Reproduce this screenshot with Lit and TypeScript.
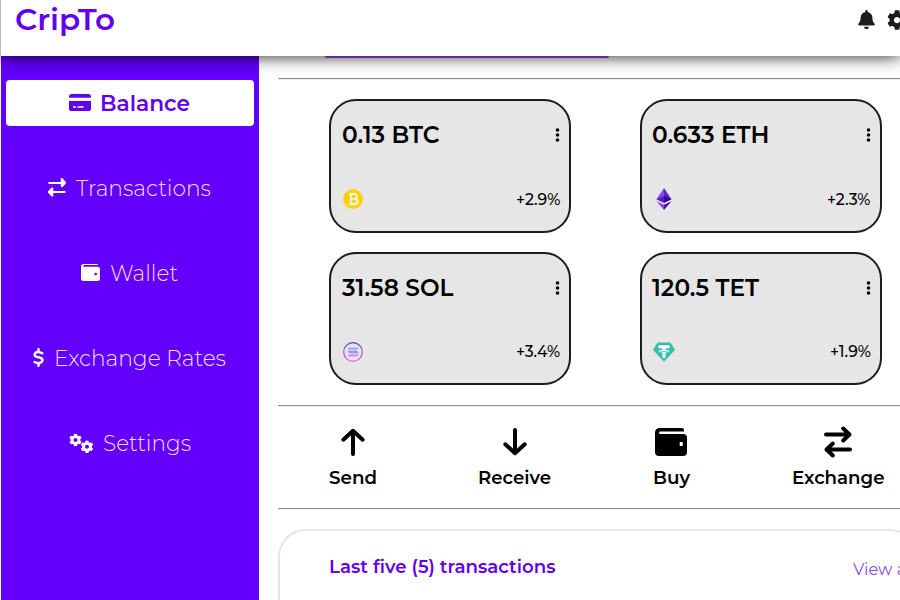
import { LitElement, html, svg, css, TemplateResult } from "lit";
import { customElement } from "lit/decorators.js";

const COG =
  "M487.4 315.7l-42.6-24.6c4.3-23.2 4.3-47 0-70.2l42.6-24.6c4.9-2.8 7.1-8.6 5.5-14-11.1-35.6-30-67.8-54.7-94.6-3.8-4.1-10-5.1-14.8-2.3L380.8 110c-17.9-15.4-38.5-27.3-60.8-35.1V25.8c0-5.6-3.9-10.5-9.4-11.7-36.7-8.2-74.3-7.8-109.2 0-5.5 1.2-9.4 6.1-9.4 11.7V75c-22.2 7.9-42.8 19.8-60.8 35.1L88.7 85.5c-4.9-2.8-11-1.9-14.8 2.3-24.7 26.7-43.6 58.9-54.7 94.6-1.7 5.4.6 11.2 5.5 14L67.3 221c-4.3 23.2-4.3 47 0 70.2l-42.6 24.6c-4.9 2.8-7.1 8.6-5.5 14 11.1 35.6 30 67.8 54.7 94.6 3.8 4.1 10 5.1 14.8 2.3l42.6-24.6c17.9 15.4 38.5 27.3 60.8 35.1v49.2c0 5.6 3.9 10.5 9.4 11.7 36.7 8.2 74.3 7.8 109.2 0 5.5-1.2 9.4-6.1 9.4-11.7v-49.2c22.2-7.9 42.8-19.8 60.8-35.1l42.6 24.6c4.9 2.8 11 1.9 14.8-2.3 24.7-26.7 43.6-58.9 54.7-94.6 1.5-5.5-.7-11.3-5.6-14.1zM256 336c-44.1 0-80-35.9-80-80s35.9-80 80-80 80 35.9 80 80-35.9 80-80 80z";
const BELL =
  "M224 512c35.32 0 63.97-28.65 63.97-64H160.03c0 35.35 28.65 64 63.97 64zm215.39-149.71c-19.32-20.76-55.47-51.99-55.47-154.29 0-77.7-54.48-139.9-127.94-155.16V32c0-17.67-14.32-32-31.98-32s-31.98 14.33-31.98 32v20.84C118.56 68.1 64.08 130.3 64.08 208c0 102.3-36.15 133.53-55.47 154.29-6 6.45-8.66 14.16-8.61 21.71.11 16.4 12.98 32 32.1 32h383.8c19.12 0 32-15.6 32.1-32 .05-7.55-2.61-15.27-8.61-21.71z";

// A line of text stretched to a set width; the baseline sits 6px above the box bottom.
const label = (text: string, width: number, cls: string) => html`
  <svg class="label ${cls}" width=${width} height="26">
    <text x="0" y="20" textLength=${width} lengthAdjust="spacingAndGlyphs">${text}</text>
  </svg>`;

const icon = (w: number, h: number, body: TemplateResult | unknown, box = `0 0 ${w} ${h}`) =>
  html`<svg class="icon" width=${w} height=${h} viewBox=${box}>${body}</svg>`;

const cardIcon = icon(22, 17, svg`
  <path d="M0 3.7V2.6A2.6 2.6 0 0 1 2.6 0h16.8A2.6 2.6 0 0 1 22 2.6v1.1z" />
  <path fill-rule="evenodd" d="M0 7h22v7.4a2.6 2.6 0 0 1-2.6 2.6H2.6A2.6 2.6 0 0 1 0 14.400zM4 12.300v1.400h3v-1.400zM8.500 12.300v1.400h6v-1.400z" />`);
const swapIcon = icon(18, 19, svg`
  <path d="M1.200 4h11.500V1.200c0-1.100 1.200-1.500 2-.8l2.900 3.300c.6.700.6 1.300 0 2l-2.900 3.200c-.8.700-2 .3-2-.8V6H1.200a1 1 0 0 1 0-2z" />
  <path d="M16.800 13H5.300v-2.400c0-1.100-1.200-1.500-2-.8L.4 13.100c-.6.700-.6 1.300 0 2l2.900 3.200c.8.700 2 .3 2-.8V15h11.500a1 1 0 0 0 0-2z" />`);
const walletSmall = icon(19, 17, svg`
  <path fill-rule="evenodd" d="M2.600 0h13.200c.7 0 1.200.5 1.200 1.100H3.200a.8.800 0 0 0 0 1.700h13.500A2.300 2.300 0 0 1 19 5v9.500a2.500 2.500 0 0 1-2.500 2.500h-14A2.500 2.500 0 0 1 0 14.500v-12A2.500 2.500 0 0 1 2.600 0zM14.700 8.800a1.300 1.300 0 1 0 0 2.600 1.300 1.300 0 0 0 0-2.600z" />`);
const dollarIcon = icon(11, 19, svg`
  <path class="stroke" stroke-width="2.500" d="M5.500 1.200v2.500M5.500 15.300v2.500M9.300 5.300C7.500 4.200 5.900 3.800 4.300 4 1.300 4.500.9 7.700 3.200 8.600c1.500.7 3.300.6 4.900 1.500 2.300 1.300 1.400 4.600-1.400 5C5 15.400 3.100 14.900 1.600 14" />`);
const cogsIcon = icon(24, 20, svg`
  <svg x="0" y=".5" width="13" height="13" viewBox="0 0 512 512"><path d=${COG} /></svg>
  <svg x="11.500" y="7.300" width="13" height="13" viewBox="0 0 512 512"><path d=${COG} /></svg>`);

const upIcon = icon(24, 28, svg`<path class="stroke" stroke-width="4" d="M12 26V3.500M2.300 11.700 12 2.800l9.700 8.900" />`);
const downIcon = icon(24, 28, svg`<path class="stroke" stroke-width="4" d="M12 2v22.500M2.300 16.300 12 25.200l9.700-8.900" />`);
const walletBig = icon(32, 28, svg`
  <path fill-rule="evenodd" d="M4.500 0H27a2 2 0 0 1 2 2v1.500H5.200a1.200 1.200 0 0 0 0 2.400H28a4 4 0 0 1 4 4V24a4 4 0 0 1-4 4H4a4 4 0 0 1-4-4V4.500A4.500 4.500 0 0 1 4.500 0zM24.700 14v4h3v-4z" />`);
const exchangeBig = icon(28, 32, svg`
  <path class="stroke" stroke-width="4" d="M2 8.500h23M19.200 2.500 25.500 8.500l-6.300 6M26 23.500H3M8.800 17.500 2.500 23.500l6.300 6" />`);

const btc = svg`
  <circle cx="11" cy="11" r="10" fill="#ffd012" />
  <path fill="none" stroke="#fff" stroke-width="1.500" d="M8.700 6.300v9.600M7.300 6.300h5c3.500 0 3.500 4.500 0 4.500H8.700h4c3.900 0 3.900 5.100 0 5.100H7.300M10 4.700v1.600M12.500 4.700v1.600M10 15.900v1.600M12.500 15.900v1.600" />`;
const eth = svg`
  <path fill="#8247e5" d="M11 0v14.700L3.500 11.200z" /><path fill="#5f23cc" d="M11 0v14.700l7.500-3.500z" />
  <path fill="#5a1cc4" d="M11 8v6.700l-7.500-3.500z" /><path fill="#34008d" d="M11 8v6.700l7.500-3.500z" />
  <path fill="#8247e5" d="M3.500 13.200 11 16.800V22z" /><path fill="#4c0fb0" d="M18.500 13.200 11 16.800V22z" />`;
const sol = svg`
  <defs><linearGradient id="ring" x1="0" y1="0" x2="0" y2="1"><stop offset="0" stop-color="#6438d8" /><stop offset="1" stop-color="#ec55ee" /></linearGradient></defs>
  <circle cx="11" cy="11" r="9.300" fill="none" stroke="url(#ring)" stroke-width="1.200" />
  <path fill="#8fb0f4" d="M7.300 6.400h9.600l-1.700 2.400H5.600z" /><path fill="#a58af0" d="M5.600 9.800h9.600l1.700 2.400H7.300z" />
  <path fill="#d98af2" d="M7.300 13.200h9.600l-1.700 2.400H5.600z" />`;
const tet = svg`
  <path fill="#35bfad" d="M4.500 1.500h13L22 9 11 20.700 0 9z" />
  <path fill="#fff" d="M5.500 4.200h11v3h-4v1.500c5.500.4 5.500 2.500 0 2.700V17h-3v-5.600c-5.500-.2-5.500-2.300 0-2.700V7.200h-4z" />
  <path fill="none" stroke="#35bfad" stroke-width=".7" d="M5.500 9.800c2 .9 9 .9 11 0" />`;

@customElement("app-root")
export class AppRoot extends LitElement {
  static styles = css`
    :host { display: block; width: 900px; height: 600px; overflow: hidden; background: #fff;
      font-family: Montserrat, Inter, "Open Sans", sans-serif; }
    * { box-sizing: border-box; }
    svg { display: block; flex: none; }
    .label { overflow: visible; fill: currentColor; }
    .icon { fill: currentColor; overflow: visible; }
    .stroke { fill: none; stroke: currentColor; stroke-linecap: round; stroke-linejoin: round; }
    .brand { font-size: 28.800px; font-weight: 600; margin-left: -1px; }
    .nav-text { font-size: 22.400px; font-weight: 300; }
    .nav-active { font-size: 22.400px; font-weight: 600; }
    .amount { font-size: 24px; font-weight: 600; margin-top: 2px; }
    .change { font-size: 16px; font-weight: 500; margin-top: -3px; }
    .action-text { font-size: 19.200px; font-weight: 600; }
    .heading { font-size: 19.200px; font-weight: 600; }
    .link { font-size: 16px; font-weight: 400; color: #8a50e4; }
    header { position: relative; z-index: 1; height: 56px; display: flex; align-items: flex-start;
      justify-content: space-between; padding: 10px 0 0 15px; color: #6200ee; background: #fff;
      border-left: 1px solid #bbb; box-shadow: 0 0 16px rgba(0, 0, 0, .9); }
    .tools { display: flex; gap: 12.500px; color: #1c1c1c; margin-right: -7px; }
    .body { display: flex; height: 544px; }
    nav { flex: none; width: 258px; margin-left: 1px; padding: 24px 5px 0; background: #6200fb; color: #fff;
      display: flex; flex-direction: column; gap: 39px; }
    .item { height: 46px; display: flex; align-items: center; justify-content: center; gap: 10px;
      border-radius: 4px; color: #fff; }
    .item .icon { margin: -1px 0 0 -1px; }
    .item .label { color: #f6dcff; margin-top: 2px; }
    .item.active { gap: 9px; background: #fff; color: #6200ee; }
    .item.active .label { color: #6200ee; }
    main { flex: none; width: 640px; margin-left: 19px; }
    .above { width: 284px; height: 2px; margin-left: 47px; background: #5a2a9c; position: relative; z-index: 2;
      border-radius: 0 0 3px 3px; }
    .rule { height: 2px; border-top: 1px solid #8e8e8e; border-bottom: 1px solid #eee; }
    .first { margin-top: 20px; }
    .cards { display: grid; grid-template-columns: 242px 242px; gap: 19.200px 68.600px; padding: 19px 0 0 51px; height: 325px;
      grid-auto-rows: 133.500px; }
    .card { border: 2px solid #1c1c1e; border-radius: 27px; background: #e6e6e6; color: #000;
      display: flex; flex-direction: column; justify-content: space-between; padding: 20px 9px 20px 10px; }
    .row { display: flex; justify-content: space-between; align-items: center; }
    .row .amount { margin-left: .500px; }
    .row .coin { margin-left: 1px; }
    .actions { display: flex; gap: 101.700px; padding: 20px 0 0 50.500px; height: 101px; }
    .action { display: flex; flex-direction: column; align-items: center; }
    .pic { height: 30px; display: flex; align-items: center; margin-bottom: 7px; }
    .panel { margin-top: 19px; height: 120px; border: 2px solid #e6e6e6; border-radius: 28px; display: flex;
      justify-content: space-between; padding: 22px 0 0 50px; color: #6200ee; }
    .panel .heading { margin-left: -1px; }
    .panel .link { margin: 2px 1.500px 0 0; }
  `;

  card(amount: string, w: number, change: string, cw: number, coin: unknown) {
    return html`<div class="card">
      <div class="row">${label(amount, w, "amount")}
        ${icon(5, 14, svg`<circle cx="2.500" cy="2" r="1.800" /><circle cx="2.500" cy="7" r="1.800" /><circle cx="2.500" cy="12" r="1.800" />`)}
      </div>
      <div class="row"><div class="coin">${icon(22, 22, coin)}</div>${label(change, cw, "change")}</div>
    </div>`;
  }

  item(pic: unknown, text: string, w: number, active = false) {
    return html`<div class="item ${active ? "active" : ""}">${pic}${label(text, w, active ? "nav-active" : "nav-text")}</div>`;
  }

  action(pic: unknown, text: string, w: number) {
    return html`<div class="action"><div class="pic">${pic}</div>${label(text, w, "action-text")}</div>`;
  }

  render() {
    return html`
      <header>
        ${label("CripTo", 100, "brand")}
        <div class="tools">
          ${icon(17, 19, svg`<path d=${BELL} />`, "0 0 448 512")}
          ${icon(20, 20, svg`<path d=${COG} />`, "0 0 512 512")}
        </div>
      </header>
      <div class="body">
        <nav>
          ${this.item(cardIcon, "Balance", 90, true)}
          ${this.item(swapIcon, "Transactions", 135)}
          ${this.item(walletSmall, "Wallet", 68)}
          ${this.item(dollarIcon, "Exchange Rates", 172)}
          ${this.item(cogsIcon, "Settings", 88)}
        </nav>
        <main>
          <div class="above"></div>
          <div class="rule first"></div>
          <section class="cards">
            ${this.card("0.13 BTC", 97.5, "+2.9%", 44.5, btc)}
            ${this.card("0.633 ETH", 117.5, "+2.3%", 43.5, eth)}
            ${this.card("31.58 SOL", 111.5, "+3.4%", 44, sol)}
            ${this.card("120.5 TET", 107, "+1.9%", 41, tet)}
          </section>
          <div class="rule"></div>
          <section class="actions">
            ${this.action(upIcon, "Send", 48)}
            ${this.action(downIcon, "Receive", 73)}
            ${this.action(walletBig, "Buy", 37)}
            ${this.action(exchangeBig, "Exchange", 92.5)}
          </section>
          <div class="rule"></div>
          <section class="panel">
            ${label("Last five (5) transactions", 226.5, "heading")}
            ${label("View all", 62, "link")}
          </section>
        </main>
      </div>`;
  }
}
